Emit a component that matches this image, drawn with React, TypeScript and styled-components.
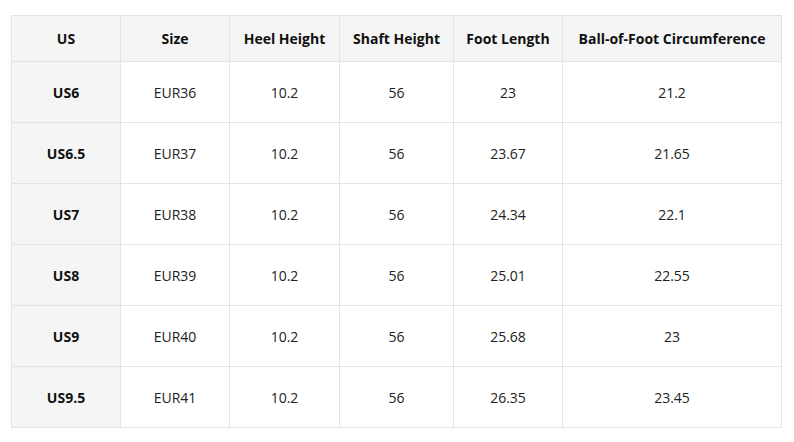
import React from "react";
import styled, { createGlobalStyle } from "styled-components";

const Global = createGlobalStyle`
  html, body { margin: 0; padding: 0; background: #ffffff; }
  body { font-family: "Open Sans", "Noto Sans", Arial, sans-serif; }
`;

const Page = styled.div`
  padding: 15px 0 0 11px;
`;

const Table = styled.table`
  border-collapse: collapse;
  table-layout: fixed;
  width: 770px;
  font-size: 14px;
  color: #1a1a1a;
`;

const Col = styled.col<{ $w: number }>`
  width: ${(p) => p.$w}px;
`;

const HeadCell = styled.th`
  height: 45px;
  padding: 0;
  background: #f5f5f5;
  border: 1px solid #e3e3e3;
  font-weight: 700;
  text-align: center;
  vertical-align: middle;
  color: #111;
`;

const Cell = styled.td<{ $key?: boolean }>`
  height: 60px;
  padding: 0;
  border: 1px solid #e3e3e3;
  text-align: center;
  vertical-align: middle;
  background: ${(p) => (p.$key ? "#f5f5f5" : "#ffffff")};
  font-weight: ${(p) => (p.$key ? 700 : 400)};
  color: ${(p) => (p.$key ? "#111" : "#222")};
`;

const headers = ["US", "Size", "Heel Height", "Shaft Height", "Foot Length", "Ball-of-Foot Circumference"];
const widths = [109, 109, 110, 114, 109, 219];
const rows = [
  ["US6", "EUR36", "10.2", "56", "23", "21.2"],
  ["US6.5", "EUR37", "10.2", "56", "23.67", "21.65"],
  ["US7", "EUR38", "10.2", "56", "24.34", "22.1"],
  ["US8", "EUR39", "10.2", "56", "25.01", "22.55"],
  ["US9", "EUR40", "10.2", "56", "25.68", "23"],
  ["US9.5", "EUR41", "10.2", "56", "26.35", "23.45"],
];

export default function App() {
  return (
    <Page>
      <Global />
      <Table>
        <colgroup>
          {widths.map((w, i) => (
            <Col key={i} $w={w} />
          ))}
        </colgroup>
        <thead>
          <tr>
            {headers.map((h) => (
              <HeadCell key={h}>{h}</HeadCell>
            ))}
          </tr>
        </thead>
        <tbody>
          {rows.map((r) => (
            <tr key={r[0]}>
              {r.map((c, i) => (
                <Cell key={i} $key={i === 0}>
                  {c}
                </Cell>
              ))}
            </tr>
          ))}
        </tbody>
      </Table>
    </Page>
  );
}
